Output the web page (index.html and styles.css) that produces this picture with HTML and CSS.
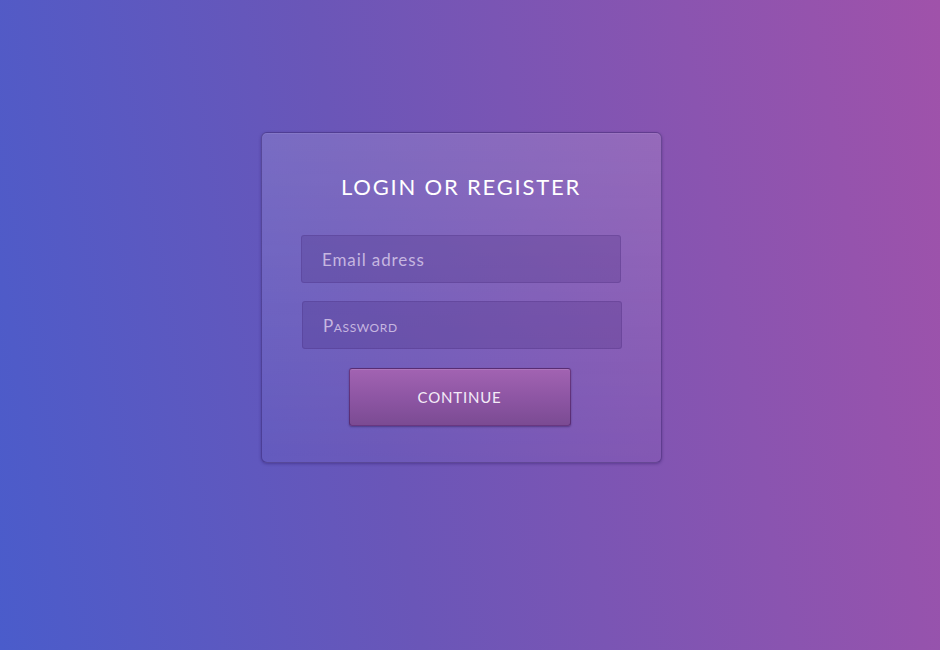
FILE: index.html
```html
<!DOCTYPE html>
<html>
<head>
<meta charset="utf-8">
<link rel="stylesheet" href="styles.css">
</head>
<body>
<main class="page">
  <form class="card">
    <h1 class="title">LOGIN OR REGISTER</h1>
    <div class="field email"><span class="ph">Email adress</span></div>
    <div class="field password"><span class="ph caps">Password</span></div>
    <button type="button" class="btn">CONTINUE</button>
  </form>
</main>
</body>
</html>
```
FILE: styles.css
```css
html, body {
  margin: 0;
  padding: 0;
  height: 100%;
}
body {
  font-family: "Lato", "Noto Sans", sans-serif;
  background: linear-gradient(80deg, #4a5ccb 0%, #6a56b8 40%, #8a54b0 75%, #a052aa 100%);
}
.page {
  height: 650px;
  display: flex;
  justify-content: center;
  align-items: flex-start;
  padding-top: 132px;
  padding-right: 18px;
  box-sizing: border-box;
}
.card {
  width: 401px;
  height: 331px;
  box-sizing: border-box;
  border: 1px solid rgba(40, 20, 90, 0.4);
  border-radius: 6px;
  background: linear-gradient(180deg, rgba(255,255,255,0.13) 0%, rgba(255,255,255,0.02) 100%);
  box-shadow: 0 1px 3px rgba(30, 10, 80, 0.35), inset 0 1px 0 rgba(255,255,255,0.08);
  display: flex;
  flex-direction: column;
  align-items: center;
  padding-top: 41px;
}
.title {
  margin: 0;
  font-weight: 400;
  font-size: 22px;
  line-height: 26px;
  letter-spacing: 1.8px;
  color: #ffffff;
}
.field {
  width: 320px;
  height: 48px;
  box-sizing: border-box;
  border: 1px solid rgba(60, 30, 110, 0.2);
  border-radius: 3px;
  background: rgba(60, 30, 110, 0.2);
  display: flex;
  align-items: center;
  padding-left: 20px;
}
.email {
  margin-top: 35px;
}
.password {
  margin-top: 18px;
  margin-left: 2px;
}
.ph {
  color: #c6b6e0;
  font-size: 17px;
  letter-spacing: 0.9px;
}
.caps {
  font-variant: small-caps;
  font-size: 17px;
  letter-spacing: 0.6px;
}
.btn {
  margin-top: 19px;
  margin-left: -3px;
  width: 222px;
  height: 58px;
  border: 1px solid rgba(60, 20, 90, 0.55);
  border-radius: 3px;
  background: linear-gradient(180deg, #a263b2 0%, #8e56a4 50%, #7b4b93 100%);
  box-shadow: 0 1px 2px rgba(30, 10, 60, 0.4), inset 0 1px 0 rgba(255,255,255,0.12);
  color: #f4ecf8;
  font-family: "Lato", "Noto Sans", sans-serif;
  font-size: 15px;
  letter-spacing: 0.8px;
  cursor: pointer;
  padding: 0;
}
```
